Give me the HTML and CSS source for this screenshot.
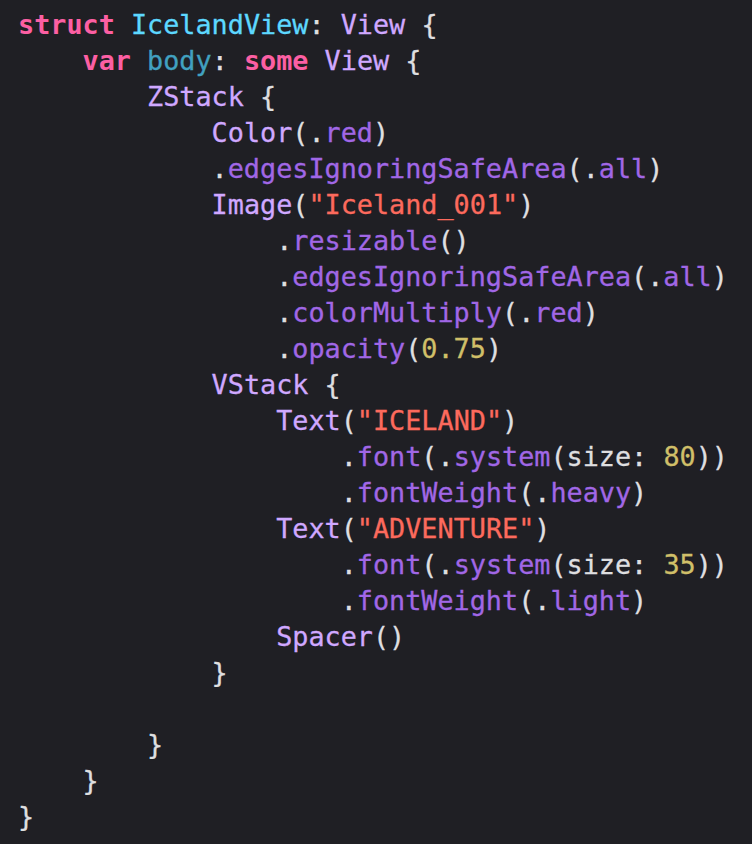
FILE: index.html
```html
<!DOCTYPE html>
<html>
<head>
<meta charset="utf-8">
<link rel="stylesheet" href="styles.css">
</head>
<body>
<pre class="code"><span class="kw">struct</span> <span class="decl">IcelandView</span>: <span class="type">View</span> {
    <span class="kw">var</span> <span class="odecl">body</span>: <span class="kw">some</span> <span class="type">View</span> {
        <span class="type">ZStack</span> {
            <span class="type">Color</span>(.<span class="fn">red</span>)
            .<span class="fn">edgesIgnoringSafeArea</span>(.<span class="fn">all</span>)
            <span class="type">Image</span>(<span class="str">"Iceland_001"</span>)
                .<span class="fn">resizable</span>()
                .<span class="fn">edgesIgnoringSafeArea</span>(.<span class="fn">all</span>)
                .<span class="fn">colorMultiply</span>(.<span class="fn">red</span>)
                .<span class="fn">opacity</span>(<span class="num">0.75</span>)
            <span class="type">VStack</span> {
                <span class="type">Text</span>(<span class="str">"ICELAND"</span>)
                    .<span class="fn">font</span>(.<span class="fn">system</span>(size: <span class="num">80</span>))
                    .<span class="fn">fontWeight</span>(.<span class="fn">heavy</span>)
                <span class="type">Text</span>(<span class="str">"ADVENTURE"</span>)
                    .<span class="fn">font</span>(.<span class="fn">system</span>(size: <span class="num">35</span>))
                    .<span class="fn">fontWeight</span>(.<span class="fn">light</span>)
                <span class="type">Spacer</span>()
            }

        }
    }
}</pre>
</body>
</html>
```
FILE: styles.css
```css
html, body {
  margin: 0;
  padding: 0;
  background: #1f1f24;
  height: 100%;
}
.code {
  margin: 0;
  padding: 7px 0 0 18px;
  font-family: "DejaVu Sans Mono", "Liberation Mono", monospace;
  font-size: 26.8px;
  line-height: 36px;
  color: #dfdfe0;
  white-space: pre;
  -webkit-text-stroke: 0.3px currentColor;
}
.kw { color: #fc5fa3; font-weight: bold; -webkit-text-stroke: 0; }
.decl { color: #5dd8ff; }
.odecl { color: #41a1c0; }
.type { color: #d0a8ff; }
.fn { color: #a167e6; }
.str { color: #fc6a5d; }
.num { color: #d0bf69; }
```
